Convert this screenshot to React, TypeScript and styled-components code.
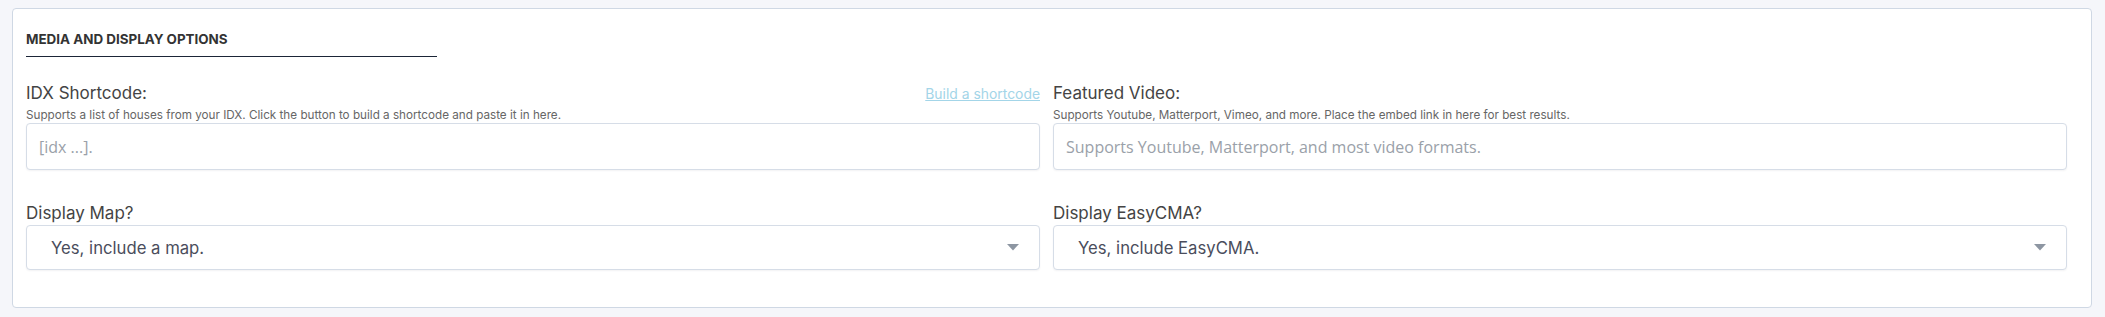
import React from 'react';
import styled, { createGlobalStyle } from 'styled-components';

const GlobalStyle = createGlobalStyle`
    html, body {
        margin: 0;
        padding: 0;
        background: #f5f6fa;
    }
    body {
        font-family: Inter, "Liberation Sans", sans-serif;
        color: #444;
    }
    * {
        box-sizing: border-box;
    }
`;

export default function App() {
    return (
        <>
            <GlobalStyle />
            <Card>
                <Header>
                    <Title>Media and display options</Title>
                </Header>
                <Grid>
                    <Field>
                        <LabelRow>
                            <Label>IDX Shortcode:</Label>
                            <BuildLink href="#">Build a shortcode</BuildLink>
                        </LabelRow>
                        <Help>Supports a list of houses from your IDX. Click the button to build a shortcode and paste it in here.</Help>
                        <TextInput placeholder="[idx ...]." />
                    </Field>
                    <Field>
                        <LabelRow>
                            <Label>Featured Video:</Label>
                        </LabelRow>
                        <Help>Supports Youtube, Matterport, Vimeo, and more. Place the embed link in here for best results.</Help>
                        <TextInput placeholder="Supports Youtube, Matterport, and most video formats." />
                    </Field>
                    <Field $spaced>
                        <LabelRow>
                            <Label>Display Map?</Label>
                        </LabelRow>
                        <Dropdown value="Yes, include a map." options={['Yes, include a map.', 'No, hide the map.']} />
                    </Field>
                    <Field $spaced>
                        <LabelRow>
                            <Label>Display EasyCMA?</Label>
                        </LabelRow>
                        <Dropdown value="Yes, include EasyCMA." options={['Yes, include EasyCMA.', 'No, hide EasyCMA.']} />
                    </Field>
                </Grid>
            </Card>
        </>
    );
}

interface DropdownProps {
    value: string
    options: string[]
}

function Dropdown(props: DropdownProps) {
    return (
        <SelectWrap>
            <Select defaultValue={props.value}>
                {props.options.map((option) => (
                    <option key={option}>{option}</option>
                ))}
            </Select>
            <Caret width="12" height="7" viewBox="0 0 12 7">
                <path d="M0 0h12L6 6.5z" fill="#8d96a2" />
            </Caret>
        </SelectWrap>
    );
}

const Card = styled.section`
    margin: 8px 13px 9px 12px;
    height: 300px;
    padding: 0 24px 0 13px;
    background: #fff;
    border: 1px solid #cfd8e4;
    border-radius: 4px;
`;

const Header = styled.div`
    width: 411px;
    padding: 20px 0 7px;
    border-bottom: 1px solid #1b2537;
`;

const Title = styled.h2`
    margin: 0;
    font-size: 13.4px;
    line-height: 20px;
    font-weight: 700;
    text-transform: uppercase;
    color: #333;
`;

const Grid = styled.div`
    display: grid;
    grid-template-columns: 1fr 1fr;
    column-gap: 13px;
    padding-top: 24px;
`;

const Field = styled.div<{ $spaced?: boolean }>`
    display: flex;
    flex-direction: column;
    margin-top: ${(p) => (p.$spaced ? '31px' : '0')};
`;

const LabelRow = styled.div`
    display: flex;
    justify-content: space-between;
    align-items: baseline;
`;

const Label = styled.label`
    font-size: 17px;
    line-height: 24px;
    color: #444;
`;

const BuildLink = styled.a`
    font-size: 13.9px;
    color: #a3d5e8;
    text-decoration: underline;
`;

const Help = styled.div`
    margin-top: 2px;
    font-size: 11.7px;
    line-height: 16px;
    color: #666;
`;

const TextInput = styled.input`
    height: 47px;
    padding: 0 12px;
    border: 1px solid #d6dde7;
    border-radius: 4px;
    box-shadow: 0 1px 2px rgba(30, 40, 60, 0.06);
    font-family: "Open Sans", sans-serif;
    font-size: 16px;
    color: #444;
    outline: none;

    &::placeholder {
        color: #9aa1a9;
    }
`;

const SelectWrap = styled.div`
    position: relative;
`;

const Select = styled.select`
    width: 100%;
    height: 45px;
    padding: 0 24px;
    appearance: none;
    background: #fff;
    border: 1px solid #d6dde7;
    border-radius: 4px;
    box-shadow: 0 1px 2px rgba(30, 40, 60, 0.06);
    font-family: Inter, "Liberation Sans", sans-serif;
    font-size: 16.7px;
    color: #4a4d5c;
    outline: none;
`;

const Caret = styled.svg`
    position: absolute;
    right: 21px;
    top: 19px;
    pointer-events: none;
`;
